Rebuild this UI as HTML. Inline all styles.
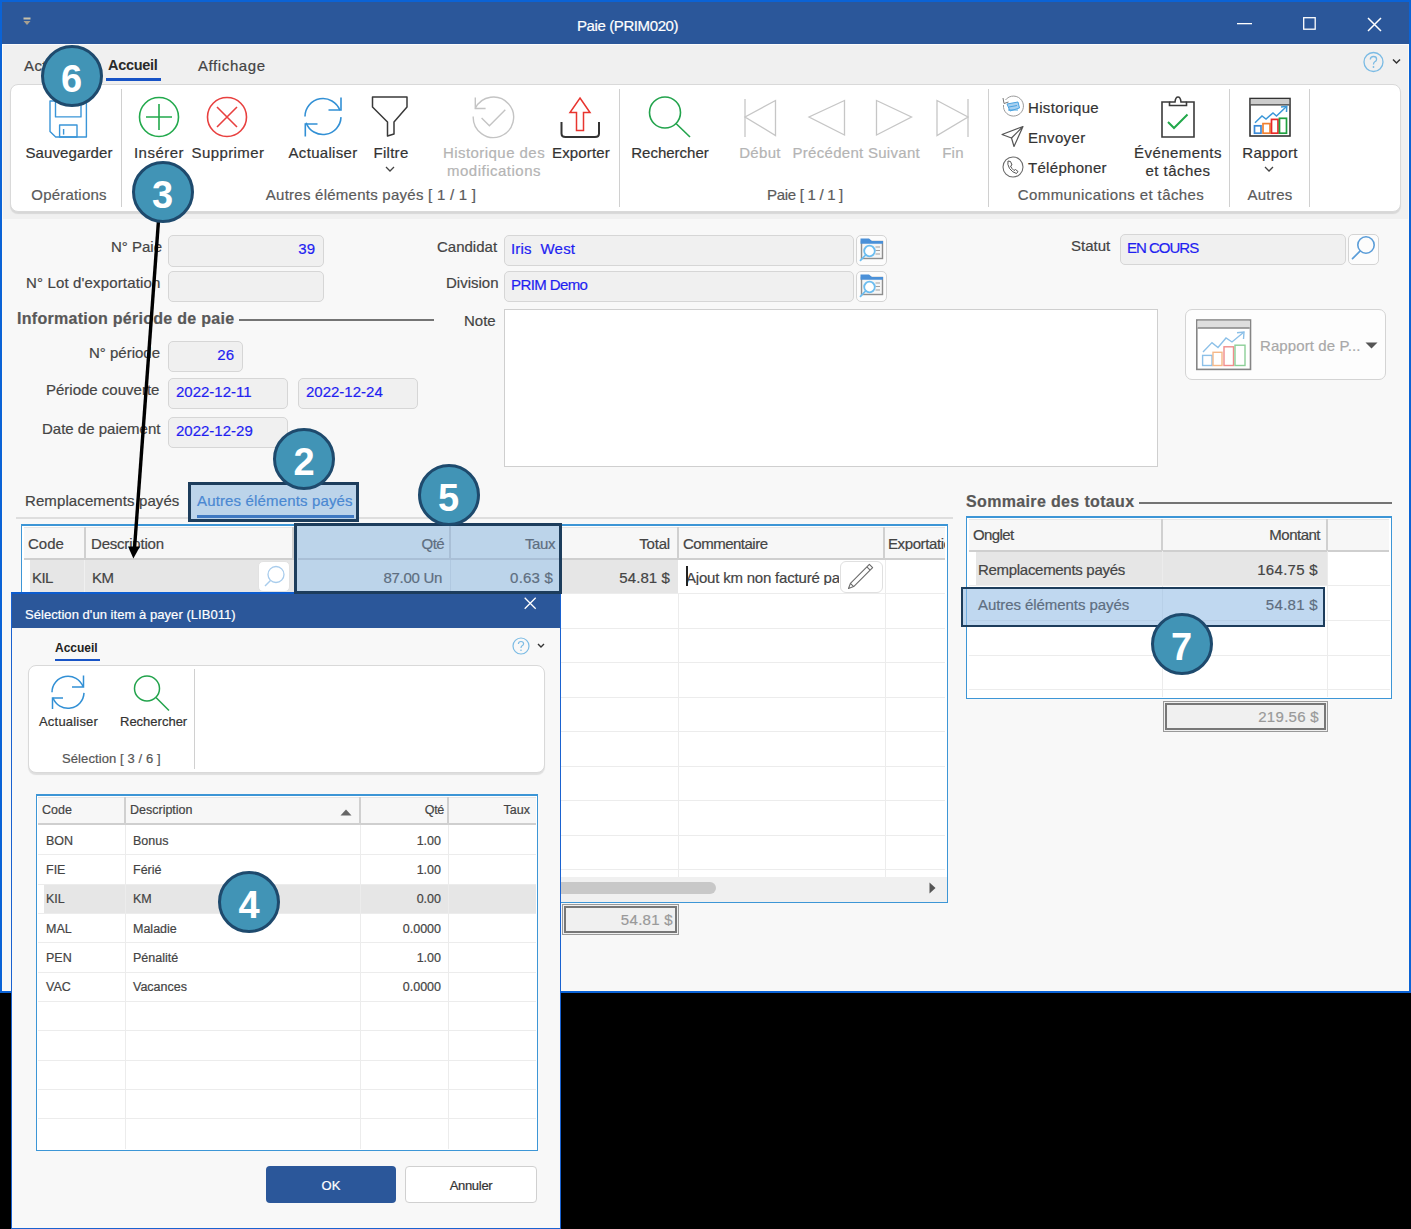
<!DOCTYPE html>
<html><head><meta charset="utf-8">
<style>
*{margin:0;padding:0;box-sizing:border-box}
html,body{width:1411px;height:1229px;overflow:hidden;background:#000;font-family:"Liberation Sans",sans-serif;}
.a{position:absolute}
.t{position:absolute;white-space:nowrap;line-height:1;}
.t,.lbl,.val,.rb,.grp,.gh{-webkit-text-stroke:0.2px currentColor}
.ns{-webkit-text-stroke:0 !important}
svg{position:absolute;overflow:visible}
#win{position:absolute;left:0;top:0;width:1411px;height:993px;background:#f8f8f8;border-left:2px solid #0b63d6;border-right:2px solid #0b63d6;border-top:2px solid #0b63d6;border-bottom:2px solid #0b63d6}
#win2{position:absolute;left:2px;top:44px;width:1407px;height:947px;border:1px solid #fdfaf4;border-top:none}
.inp{position:absolute;background:#f0f0f0;border:1px solid #d6d6d6;border-radius:5px}
.lbl{position:absolute;white-space:nowrap;line-height:1;font-size:15px;color:#444}
.val{position:absolute;white-space:nowrap;line-height:1;font-size:15px;color:#1f1ff0}
.sep{position:absolute;width:1px;background:#d0d0d0}
.rb{position:absolute;white-space:nowrap;line-height:1;font-size:15px;color:#333;text-align:center}
.rbd{color:#b4b4b4}
.grp{position:absolute;white-space:nowrap;line-height:1;font-size:15px;color:#5a5a5a;text-align:center}
.circ{position:absolute;z-index:2;width:62px;height:62px;border-radius:50%;background:#4194b6;border:3.7px solid #1e4a6d;color:#fff;font-weight:bold;font-size:38px;text-align:center;line-height:62px}
.hl{position:absolute;background:#bcd4ea;border:3px solid #1d3d5c}
.gh{position:absolute;white-space:nowrap;line-height:1;font-size:15px;color:#444}
</style></head><body>
<div id="win"></div><div id="win2"></div>
<!-- title bar -->
<div class="a" style="left:2px;top:2px;width:1407px;height:42px;background:#2b579a"></div>
<div class="t" style="left:577px;top:18px;font-size:15px;color:#fff;letter-spacing:-0.4px">Paie (PRIM020)</div>
<svg style="left:22px;top:16px" width="12" height="12"><rect x="1.5" y="1.5" width="7" height="2" fill="#c8c0a8"/><path d="M1.5 5 L8.5 5 L5 9 Z" fill="#a8a090"/></svg>
<svg style="left:1237px;top:23px" width="16" height="2"><rect x="0" y="0" width="15" height="1.3" fill="#fff"/></svg>
<svg style="left:1303px;top:17px" width="14" height="14"><rect x="0.7" y="0.7" width="11.5" height="11.5" fill="none" stroke="#fff" stroke-width="1.3"/></svg>
<svg style="left:1367px;top:17px" width="16" height="16"><path d="M1 1 L14 14 M14 1 L1 14" stroke="#fff" stroke-width="1.5"/></svg>
<!-- ribbon tab area -->
<div class="a" style="left:3px;top:44px;width:1405px;height:175px;background:#f0f0f0;border-top:1px solid #fbfbfb"></div>
<div class="t" style="left:24px;top:58px;font-size:15px;color:#444;letter-spacing:0.4px">Actions</div>
<div class="t ns" style="left:108px;top:58px;font-size:14.5px;color:#2a2a2a;font-weight:bold;letter-spacing:-0.3px">Accueil</div>
<div class="a" style="left:106px;top:78px;width:55px;height:3px;background:#1753c6"></div>
<div class="t" style="left:198px;top:58px;font-size:15px;color:#444;letter-spacing:0.6px">Affichage</div>
<svg style="left:1362px;top:51px" width="40" height="24"><circle cx="11.5" cy="11" r="9.5" fill="none" stroke="#7bbbe4" stroke-width="1.3"/><path d="M8.3 8.5 Q8.5 5.5 11.5 5.5 Q14.6 5.5 14.6 8.3 Q14.6 10 12.5 11 Q11.5 11.6 11.5 13.5" fill="none" stroke="#7bbbe4" stroke-width="1.3"/><circle cx="11.5" cy="16" r="0.9" fill="#7bbbe4"/><path d="M31 8.5 L34.5 12 L38 8.5" fill="none" stroke="#333" stroke-width="1.5"/></svg>

<!-- ribbon panel -->
<div class="a" style="left:10px;top:84px;width:1391px;height:128px;background:#fff;border:1px solid #d9d9d9;border-radius:8px;box-shadow:0 2px 1px rgba(0,0,0,0.10)"></div>
<div class="sep" style="left:121px;top:89px;height:118px"></div>
<div class="sep" style="left:619px;top:89px;height:118px"></div>
<div class="sep" style="left:988px;top:89px;height:118px"></div>
<div class="sep" style="left:1229px;top:89px;height:118px"></div>
<div class="sep" style="left:1309px;top:89px;height:118px"></div>

<!-- Sauvegarder floppy -->
<svg style="left:49px;top:97px" width="42" height="44"><g fill="none" stroke="#3a95d8" stroke-width="1.4" stroke-linejoin="round"><path d="M1 4 H37.4 V40 H6.7 L1 34.6 Z"/><rect x="6.5" y="4" width="25.5" height="15.9"/><rect x="10.6" y="28" width="17.4" height="12"/><path d="M14.6 32 V37.6"/></g></svg>
<div class="rb" style="left:16px;top:145px;width:106px;letter-spacing:0.1px">Sauvegarder</div>
<div class="grp" style="left:16px;top:187px;width:106px;letter-spacing:0.2px">Opérations</div>

<!-- Inserer -->
<svg style="left:137px;top:95px" width="44" height="44"><circle cx="22" cy="22" r="19.5" fill="none" stroke="#22a94c" stroke-width="1.6"/><path d="M9 22 H35 M22 9 V35" stroke="#22a94c" stroke-width="1.6"/></svg>
<div class="rb" style="left:129px;top:145px;width:60px;letter-spacing:0.5px">Insérer</div>
<!-- Supprimer -->
<svg style="left:205px;top:95px" width="44" height="44"><circle cx="22" cy="22" r="19.5" fill="none" stroke="#e8403f" stroke-width="1.6"/><path d="M12 12 L32 32 M32 12 L12 32" stroke="#e8403f" stroke-width="1.6"/></svg>
<div class="rb" style="left:190px;top:145px;width:76px;letter-spacing:0.4px">Supprimer</div>
<!-- Actualiser -->
<svg style="left:301px;top:95px" width="46" height="46"><g fill="none" stroke="#3290d5" stroke-width="1.6"><path d="M4 21.5 A18 18 0 0 1 38.9 15.34"/><path d="M40 2.5 V15 H27.5"/><path d="M39.99 22.13 A18 18 0 0 1 5.09 27.66"/><path d="M4.3 41.5 V29 H16.5"/></g></svg>
<div class="rb" style="left:286px;top:145px;width:74px;letter-spacing:0.3px">Actualiser</div>
<!-- Filtre -->
<svg style="left:371px;top:95px" width="40" height="46"><path d="M1.5 2 H36 V12 L23 27 V39 L16.5 41 V27 L1.5 12 Z" fill="none" stroke="#3a3a3a" stroke-width="1.5" stroke-linejoin="round"/></svg>
<div class="rb" style="left:365px;top:145px;width:52px;letter-spacing:0.3px">Filtre</div>
<svg style="left:385px;top:166px" width="10" height="7"><path d="M1 1 L5 5 L9 1" fill="none" stroke="#444" stroke-width="1.3"/></svg>
<div class="grp" style="left:230px;top:187px;width:282px;letter-spacing:0.25px">Autres éléments payés [ 1 / 1 ]</div>
<!-- Historique des modifs -->
<svg style="left:471px;top:95px" width="46" height="46"><g fill="none" stroke="#c4c4c4" stroke-width="1.4"><path d="M2.22 21.49 A20.2 20.2 0 1 0 4.23 13.48"/><path d="M4.3 2.5 V13.5 H14.6"/><path d="M10.6 23 L18.4 30.8 L34.3 14.7"/></g></svg>
<div class="rb rbd" style="left:437px;top:145px;width:114px;letter-spacing:0.45px">Historique des</div>
<div class="rb rbd" style="left:437px;top:163px;width:114px;letter-spacing:0.5px">modifications</div>
<!-- Exporter -->
<svg style="left:558px;top:95px" width="44" height="46"><path d="M22 3 L32 17.5 H25.5 V35.5 H18.5 V17.5 H12 Z" fill="none" stroke="#e8352f" stroke-width="1.5" stroke-linejoin="miter"/><path d="M3.5 27 V38.5 Q3.5 42 7.5 42 H37 Q41 42 41 38.5 V27" fill="none" stroke="#333" stroke-width="2"/></svg>
<div class="rb" style="left:545px;top:145px;width:72px;letter-spacing:0.15px">Exporter</div>
<!-- Rechercher -->
<svg style="left:645px;top:94px" width="50" height="46"><circle cx="20" cy="18.5" r="15.5" fill="none" stroke="#22a34c" stroke-width="1.6"/><path d="M31 29.5 L45 43" stroke="#22a34c" stroke-width="1.6"/></svg>
<div class="rb" style="left:626px;top:145px;width:88px">Rechercher</div>
<!-- nav -->
<svg style="left:740px;top:96px" width="240" height="46"><g fill="none" stroke="#c6c6c6" stroke-width="1.3"><path d="M5 3 V41"/><path d="M35.5 4.5 L5 21 L35.5 39.5 Z"/><path d="M104.5 4.5 L69 21 L104.5 39 Z"/><path d="M136.5 4.5 L171.5 21 L136.5 39 Z"/><path d="M197 4.5 L228 21 L197 39.5 Z"/><path d="M228 3 V41"/></g></svg>
<div class="rb rbd" style="left:730px;top:145px;width:60px;letter-spacing:0.3px">Début</div>
<div class="rb rbd" style="left:789px;top:145px;width:78px;letter-spacing:0.3px">Précédent</div>
<div class="rb rbd" style="left:866px;top:145px;width:56px;letter-spacing:0.3px">Suivant</div>
<div class="rb rbd" style="left:933px;top:145px;width:40px;letter-spacing:0.3px">Fin</div>
<div class="grp" style="left:740px;top:187px;width:130px;letter-spacing:-0.3px">Paie [ 1 / 1 ]</div>
<!-- communications -->
<svg style="left:1001px;top:95px" width="24" height="24"><path d="M4.5 5 A10 10 0 1 1 2.5 10" fill="none" stroke="#9a9a9a" stroke-width="1"/><path d="M2 3 L3 8.5 L7.5 7" fill="none" stroke="#777" stroke-width="1"/><path d="M6 9 L17 7 L18.5 13 L9 16 Z" fill="#a8d0f0" stroke="#4aa3e0" stroke-width="1"/><path d="M8 12 L16 10.5 M7 15 L17 15" stroke="#4aa3e0" stroke-width="1"/></svg>
<div class="rb" style="left:1028px;top:100px;letter-spacing:0.35px">Historique</div>
<svg style="left:1001px;top:125px" width="24" height="24"><path d="M1 9.5 L22 1.5 L13 21.5 L10.5 13 Z M10.5 13 L22 1.5" fill="none" stroke="#555" stroke-width="1.2" stroke-linejoin="round"/></svg>
<div class="rb" style="left:1028px;top:130px;letter-spacing:0.35px">Envoyer</div>
<svg style="left:1001px;top:155px" width="24" height="24"><circle cx="12" cy="12" r="10" fill="none" stroke="#6a6a6a" stroke-width="1.1"/><path d="M7 6 Q6 9 8.5 13.5 Q11.5 17.5 15.5 18.5 L17 16.5 L14.5 14.5 L13 15.5 Q10.5 13.5 9.5 11 L11 10 L9.5 6.5 Z" fill="none" stroke="#555" stroke-width="1"/></svg>
<div class="rb" style="left:1028px;top:160px;letter-spacing:0.3px">Téléphoner</div>
<!-- evenements -->
<svg style="left:1160px;top:95px" width="38" height="46"><path d="M2 7 H9.5 V10.5 H26.5 V7 H34 V42 H2 Z" fill="none" stroke="#3a3a3a" stroke-width="1.6"/><path d="M9.5 7 H15 Q15.5 2 18 2 Q20.5 2 21 7 H26.5" fill="none" stroke="#3a3a3a" stroke-width="1.6"/><path d="M8 27 L14 33 L27.5 19.5" fill="none" stroke="#21a84a" stroke-width="2"/></svg>
<div class="rb" style="left:1128px;top:145px;width:100px;letter-spacing:0.45px">Événements</div>
<div class="rb" style="left:1128px;top:163px;width:100px;letter-spacing:0.45px">et tâches</div>
<div class="grp" style="left:995px;top:187px;width:232px;letter-spacing:0.4px">Communications et tâches</div>
<!-- rapport -->
<svg style="left:1249px;top:97px" width="44" height="42"><rect x="1" y="1.5" width="40" height="37.5" fill="#fff" stroke="#333" stroke-width="1.6"/><rect x="1.8" y="2.3" width="38.4" height="5" fill="#ccc"/><path d="M1.8 7.8 H40.2" stroke="#333" stroke-width="1.2"/><g fill="none" stroke-width="1.7"><path d="M6 25.8 L13 19 L17 22 L24 16 L27.5 19 L37.5 9.5" stroke="#3b97d8" stroke-width="1.5"/><path d="M32 10 L37.8 9.3 L37.5 15" stroke="#3b97d8" stroke-width="1.5"/><rect x="5.5" y="28.8" width="6.5" height="7.4" stroke="#3b8ad8"/><rect x="14" y="26.6" width="7" height="9.6" stroke="#f08030"/><rect x="22.5" y="22.4" width="6.5" height="13.8" stroke="#e82828"/><rect x="30.5" y="21.3" width="7" height="14.9" stroke="#1fa040"/></g></svg>
<div class="rb" style="left:1230px;top:145px;width:80px;letter-spacing:0.3px">Rapport</div>
<svg style="left:1264px;top:166px" width="10" height="7"><path d="M1 1 L5 5 L9 1" fill="none" stroke="#444" stroke-width="1.3"/></svg>
<div class="grp" style="left:1230px;top:187px;width:80px;letter-spacing:0.3px">Autres</div>
<!-- FORM -->
<div class="lbl" style="left:111px;top:239.0px">N° Paie</div>
<div class="inp" style="left:168px;top:235px;width:156px;height:32px"></div>
<div class="val" style="left:168px;top:241.3px;width:147px;text-align:right">39</div>
<div class="lbl" style="left:26px;top:275.0px;letter-spacing:0.15px">N° Lot d'exportation</div>
<div class="inp" style="left:168px;top:271px;width:156px;height:31px"></div>
<div class="t" style="left:17px;top:310.8px;font-size:16px;font-weight:bold;color:#585858;letter-spacing:0.28px">Information période de paie</div>
<div class="a" style="left:239px;top:319px;width:195px;height:1.5px;background:#747474"></div>
<div class="lbl" style="left:89px;top:345.0px">N° période</div>
<div class="inp" style="left:168px;top:341px;width:75px;height:31px"></div>
<div class="val" style="left:168px;top:347.3px;width:66px;text-align:right">26</div>
<div class="lbl" style="left:46px;top:382.0px">Période couverte</div>
<div class="inp" style="left:168px;top:378px;width:120px;height:31px"></div>
<div class="val" style="left:176px;top:384.3px;letter-spacing:0px">2022-12-11</div>
<div class="inp" style="left:298px;top:378px;width:120px;height:31px"></div>
<div class="val" style="left:306px;top:384.3px;letter-spacing:0px">2022-12-24</div>
<div class="lbl" style="left:42px;top:421.0px">Date de paiement</div>
<div class="inp" style="left:168px;top:417px;width:120px;height:31px"></div>
<div class="val" style="left:176px;top:423.3px;letter-spacing:0px">2022-12-29</div>

<div class="lbl" style="left:437px;top:239.0px">Candidat</div>
<div class="inp" style="left:504px;top:235px;width:350px;height:31px"></div>
<div class="val" style="left:511px;top:240.7px;letter-spacing:0.2px">Iris&nbsp; West</div>
<div class="inp" style="left:856px;top:235px;width:31px;height:31px;background:#fcfcfc;border-color:#d4d4d4"></div>
<div class="lbl" style="left:446px;top:275.0px">Division</div>
<div class="inp" style="left:504px;top:271px;width:350px;height:31px"></div>
<div class="val" style="left:511px;top:276.7px;letter-spacing:-0.6px">PRIM Demo</div>
<div class="inp" style="left:856px;top:271px;width:31px;height:31px;background:#fcfcfc;border-color:#d4d4d4"></div>
<svg style="left:856px;top:235px" width="31" height="31"><g><rect x="5.5" y="6.5" width="21" height="17" fill="#f6f6f6" stroke="#8e8e8e" stroke-width="1.4"/><path d="M4.5 3.5 H13 L16 6 H27 V8.8 H4.5 Z" fill="#4a90d8"/><path d="M19.5 12 H24 M19.5 15.5 H24 M19.5 19 H24" stroke="#a0a0a0" stroke-width="1.2"/><circle cx="13.5" cy="16" r="5.3" fill="#fff" stroke="#6cbdf0" stroke-width="1.8"/><path d="M9.6 20 L4.5 25.3" stroke="#6cbdf0" stroke-width="1.8" stroke-linecap="round"/></g></svg>
<svg style="left:856px;top:271px" width="31" height="31"><g><rect x="5.5" y="6.5" width="21" height="17" fill="#f6f6f6" stroke="#8e8e8e" stroke-width="1.4"/><path d="M4.5 3.5 H13 L16 6 H27 V8.8 H4.5 Z" fill="#4a90d8"/><path d="M19.5 12 H24 M19.5 15.5 H24 M19.5 19 H24" stroke="#a0a0a0" stroke-width="1.2"/><circle cx="13.5" cy="16" r="5.3" fill="#fff" stroke="#6cbdf0" stroke-width="1.8"/><path d="M9.6 20 L4.5 25.3" stroke="#6cbdf0" stroke-width="1.8" stroke-linecap="round"/></g></svg>
<div class="lbl" style="left:464px;top:313.0px">Note</div>
<div class="a" style="left:504px;top:309px;width:654px;height:158px;background:#fff;border:1px solid #cfcfcf"></div>

<div class="lbl" style="left:1071px;top:238.0px">Statut</div>
<div class="inp" style="left:1120px;top:234px;width:226px;height:31px"></div>
<div class="val" style="left:1127px;top:239.6px;letter-spacing:-1px">EN COURS</div>
<div class="inp" style="left:1348px;top:234px;width:31px;height:31px;background:#fcfcfc;border-color:#d4d4d4"></div>
<svg style="left:1350px;top:236px" width="28" height="28"><circle cx="16" cy="9" r="8.2" fill="none" stroke="#5b9dd8" stroke-width="1.6"/><path d="M10 15.2 L2.5 22.6" stroke="#5b9dd8" stroke-width="1.7" stroke-linecap="round"/></svg>

<div class="a" style="left:1185px;top:309px;width:201px;height:71px;background:#fdfdfd;border:1.5px solid #d4d4d4;border-radius:7px"></div>
<svg style="left:1195px;top:318px" width="58" height="54"><rect x="1.8" y="2" width="53.7" height="49.4" fill="#fff" stroke="#858585" stroke-width="1.6"/><rect x="2.6" y="2.8" width="52.1" height="7" fill="#dedede"/><path d="M2.6 10 H54.7" stroke="#858585" stroke-width="1.4"/><g fill="none" stroke-width="1.4"><path d="M8 34 L17 24.6 L23 29.5 L31 20 L37 24 L49 14" stroke="#8cc0e8"/><path d="M42 14.8 L49 14 L48.5 21" stroke="#8cc0e8"/><rect x="7.6" y="37.4" width="9.4" height="10.1" stroke="#8cc0e8"/><rect x="18" y="34.3" width="9" height="13.2" stroke="#f5b888"/><rect x="29" y="28.8" width="9.5" height="18.7" stroke="#f08c8c"/><rect x="40" y="27.2" width="10" height="20.3" stroke="#8ccf98"/></g></svg>
<div class="t" style="left:1260px;top:338px;font-size:15px;color:#a8a8a8;letter-spacing:0.1px">Rapport de P...</div>
<svg style="left:1365px;top:342px" width="14" height="8"><path d="M0.5 0.5 H12.5 L6.5 6.5 Z" fill="#555"/></svg>

<!-- tabs -->
<div class="a" style="left:16px;top:517px;width:937px;height:2px;background:#dedede"></div>
<div class="t" style="left:25px;top:493px;font-size:15px;color:#444;letter-spacing:0.1px">Remplacements payés</div>
<div class="hl" style="left:188px;top:482px;width:171px;height:40px"></div>
<div class="t" style="left:197px;top:493px;font-size:15px;color:#4a88d2;letter-spacing:0.15px">Autres éléments payés</div>
<div class="a" style="left:197px;top:515px;width:157px;height:3px;background:#3f79c2"></div>
<!-- MAIN GRID -->
<div class="a" style="left:21px;top:524px;width:927px;height:379px;background:#fff;border:1px solid #3d96d6;border-top-width:2px"></div>
<div class="a" style="left:24px;top:527px;width:921px;height:33px;background:#f7f7f7;border-bottom:2px solid #cfcfcf;border-top:1px solid #e6e6e6"></div>
<div class="a" style="left:84px;top:527px;width:2px;height:32px;background:#d0d0d0"></div>
<div class="a" style="left:292px;top:527px;width:2px;height:32px;background:#d0d0d0"></div>
<div class="a" style="left:449px;top:527px;width:2px;height:32px;background:#d0d0d0"></div>
<div class="a" style="left:677px;top:527px;width:2px;height:32px;background:#d0d0d0"></div>
<div class="a" style="left:883px;top:527px;width:2px;height:32px;background:#d0d0d0"></div>
<div class="gh" style="left:28px;top:536px">Code</div>
<div class="gh" style="left:91px;top:536px;letter-spacing:-0.2px">Description</div>
<div class="gh" style="left:590px;top:536px;width:80px;text-align:right;letter-spacing:-0.2px">Total</div>
<div class="gh" style="left:683px;top:536px;letter-spacing:-0.5px">Commentaire</div>
<div class="gh" style="left:888px;top:536px;letter-spacing:-0.4px;width:57px;overflow:hidden">Exportation</div>
<!-- row1 -->
<div class="a" style="left:30px;top:560px;width:648px;height:33px;background:#e6e6e6"></div>
<div class="a" style="left:84px;top:560px;width:1px;height:33px;background:#f0f0f0"></div>
<div class="gh" style="left:32px;top:570px;letter-spacing:-0.6px">KIL</div>
<div class="gh" style="left:92px;top:570px;letter-spacing:-0.6px">KM</div>
<div class="a" style="left:258px;top:561px;width:32px;height:31px;background:#fff;border:1px solid #e2e2e2;border-radius:5px"></div>
<svg style="left:260px;top:562px" width="30" height="30"><circle cx="16" cy="12.5" r="8" fill="none" stroke="#a8ccec" stroke-width="1.3"/><path d="M10.5 18.5 L5 24" stroke="#a8ccec" stroke-width="1.4"/></svg>
<div class="gh" style="left:590px;top:570px;width:80px;text-align:right;letter-spacing:0.1px">54.81 $</div>
<div class="gh" style="left:686px;top:570px;letter-spacing:-0.2px;width:153px;overflow:hidden">Ajout km non facturé pa</div>
<div class="a" style="left:686px;top:566px;width:2px;height:20px;background:#222"></div>
<div class="a" style="left:840px;top:561px;width:43px;height:32px;background:#fff;border:1px solid #e0e0e0;border-radius:6px"></div>
<svg style="left:845px;top:564px" width="34" height="28"><path d="M3.5 24.5 L5.41 19.33 L24.37 0.37 L27.63 3.63 L8.67 22.59 Z M5.41 19.33 L8.67 22.59 M21.87 2.87 L25.13 6.13" fill="none" stroke="#6a6a6a" stroke-width="1.1" stroke-linejoin="round"/></svg>
<!-- grid lines -->
<div class="a" style="left:561px;top:593px;width:384px;height:1px;background:#ececec"></div>
<div class="a" style="left:561px;top:628px;width:384px;height:1px;background:#ececec"></div>
<div class="a" style="left:561px;top:662px;width:384px;height:1px;background:#ececec"></div>
<div class="a" style="left:561px;top:697px;width:384px;height:1px;background:#ececec"></div>
<div class="a" style="left:561px;top:731px;width:384px;height:1px;background:#ececec"></div>
<div class="a" style="left:561px;top:766px;width:384px;height:1px;background:#ececec"></div>
<div class="a" style="left:561px;top:800px;width:384px;height:1px;background:#ececec"></div>
<div class="a" style="left:561px;top:835px;width:384px;height:1px;background:#ececec"></div>
<div class="a" style="left:561px;top:869px;width:384px;height:1px;background:#ececec"></div>
<div class="a" style="left:678px;top:593px;width:1px;height:284px;background:#ececec"></div>
<div class="a" style="left:885px;top:560px;width:1px;height:317px;background:#ececec"></div>
<!-- scrollbar -->
<div class="a" style="left:22px;top:877px;width:925px;height:25px;background:#f0f0f0"></div>
<div class="a" style="left:400px;top:882px;width:316px;height:12px;background:#c8c8c8;border-radius:6px"></div>
<svg style="left:928px;top:882px" width="10" height="12"><path d="M1.5 0.5 L7.5 6 L1.5 11.5 Z" fill="#555"/></svg>
<div class="a" style="left:562px;top:904px;width:117px;height:31px;border:1px solid #999;background:#f0f0f0"></div>
<div class="a" style="left:564px;top:906px;width:113px;height:27px;border:2px solid #777"></div>
<div class="gh" style="left:570px;top:912px;width:103px;text-align:right;color:#999;letter-spacing:0.3px">54.81 $</div>

<!-- SUMMARY -->
<div class="t" style="left:966px;top:494.3px;font-size:16px;font-weight:bold;color:#585858;letter-spacing:0.35px">Sommaire des totaux</div>
<div class="a" style="left:1139px;top:502px;width:253px;height:1.5px;background:#747474"></div>
<div class="a" style="left:966px;top:516px;width:426px;height:183px;background:#fff;border:1px solid #3d96d6;border-top-width:2px"></div>
<div class="a" style="left:969px;top:519px;width:420px;height:33px;background:#f7f7f7;border-bottom:2px solid #cfcfcf;border-top:1px solid #e6e6e6"></div>
<div class="a" style="left:1161px;top:519px;width:2px;height:32px;background:#d0d0d0"></div>
<div class="a" style="left:1326px;top:519px;width:2px;height:32px;background:#d0d0d0"></div>
<div class="gh" style="left:973px;top:527px;letter-spacing:-0.6px">Onglet</div>
<div class="gh" style="left:1200px;top:527px;width:120px;text-align:right;letter-spacing:-0.5px">Montant</div>
<div class="a" style="left:976px;top:552px;width:351px;height:33px;background:#e6e6e6"></div>
<div class="gh" style="left:978px;top:562px;letter-spacing:-0.3px">Remplacements payés</div>
<div class="gh" style="left:1200px;top:562px;width:118px;text-align:right;letter-spacing:0.3px">164.75 $</div>
<div class="a" style="left:969px;top:585px;width:421px;height:1px;background:#ececec"></div>
<div class="a" style="left:969px;top:620px;width:421px;height:1px;background:#ececec"></div>
<div class="a" style="left:969px;top:655px;width:421px;height:1px;background:#ececec"></div>
<div class="a" style="left:969px;top:689px;width:421px;height:1px;background:#ececec"></div>
<div class="a" style="left:1162px;top:551px;width:1px;height:146px;background:#ececec"></div>
<div class="a" style="left:1327px;top:551px;width:1px;height:146px;background:#ececec"></div>
<div class="hl" style="left:961px;top:587px;width:364px;height:40px;border-width:2.5px;background:rgba(150,190,230,0.6)"></div>
<div class="gh" style="left:978px;top:597px;color:#5e6e80;letter-spacing:-0.07px">Autres éléments payés</div>
<div class="gh" style="left:1200px;top:597px;width:118px;text-align:right;color:#5e6e80;letter-spacing:0.3px">54.81 $</div>
<div class="a" style="left:1163px;top:701px;width:165px;height:31px;border:1px solid #999;background:#f0f0f0"></div>
<div class="a" style="left:1165px;top:703px;width:161px;height:27px;border:2px solid #777"></div>
<div class="gh" style="left:1170px;top:709px;width:149px;text-align:right;color:#999;letter-spacing:0.3px">219.56 $</div>
<!-- BOX 5 -->
<div class="hl" style="left:294px;top:523px;width:268px;height:71px;z-index:1;background:transparent"></div>
<div class="a" style="left:297px;top:526px;width:262px;height:65px;background:#bcd4ea"></div>
<div class="a" style="left:449px;top:526px;width:2px;height:33px;background:#a9bfd6"></div>
<div class="a" style="left:450px;top:560px;width:1px;height:31px;background:#b0c8e0"></div>
<div class="a" style="left:298px;top:558px;width:261px;height:2px;background:#a9bfd6"></div>
<div class="gh" style="left:380px;top:536px;width:64px;text-align:right;color:#5e6e80;letter-spacing:-0.6px">Qté</div>
<div class="gh" style="left:480px;top:536px;width:75px;text-align:right;color:#5e6e80;letter-spacing:-0.4px">Taux</div>
<div class="gh" style="left:360px;top:570px;width:82px;text-align:right;color:#5e6e80;letter-spacing:-0.3px">87.00 Un</div>
<div class="gh" style="left:470px;top:570px;width:83px;text-align:right;color:#5e6e80;letter-spacing:0.2px">0.63 $</div>

<!-- DIALOG -->
<div class="a" style="left:11px;top:592px;width:550px;height:637px;background:#f8f8f8;border:1px solid #1a62d0;border-top:2px solid #0c5ccf"></div>
<div class="a" style="left:12px;top:594px;width:548px;height:34px;background:#2b579a"></div>
<div class="t" style="left:25px;top:608px;font-size:13px;color:#fff;letter-spacing:0.05px">Sélection d'un item à payer (LIB011)</div>
<svg style="left:524px;top:597px" width="14" height="14"><path d="M0.7 0.8 L11.7 11.8 M11.7 0.8 L0.7 11.8" stroke="#fff" stroke-width="1.3"/></svg>
<div class="t ns" style="left:55px;top:642px;font-size:12px;font-weight:bold;color:#222">Accueil</div>
<div class="a" style="left:55px;top:659px;width:45px;height:2px;background:#1753c6"></div>
<svg style="left:510px;top:635px" width="40" height="24"><circle cx="11" cy="11" r="8" fill="none" stroke="#7bbbe4" stroke-width="1.2"/><path d="M8.4 9 Q8.5 6.5 11 6.5 Q13.6 6.5 13.6 8.8 Q13.6 10.2 11.8 11 Q11 11.5 11 13" fill="none" stroke="#7bbbe4" stroke-width="1.2"/><circle cx="11" cy="15.3" r="0.8" fill="#7bbbe4"/><path d="M28 9 L31 12 L34 9" fill="none" stroke="#333" stroke-width="1.4"/></svg>
<div class="a" style="left:28px;top:665px;width:517px;height:108px;background:#fff;border:1px solid #d9d9d9;border-radius:8px;box-shadow:0 2px 1px rgba(0,0,0,0.10)"></div>
<div class="sep" style="left:194px;top:669px;height:100px"></div>
<svg style="left:49px;top:673px" width="38" height="38"><g fill="none" stroke="#3290d5" stroke-width="1.5"><path d="M3 19.3 A16 16 0 0 1 34.04 13.83"/><path d="M34.5 2.5 V14 H23"/><path d="M34.99 19.86 A16 16 0 0 1 3.96 24.77"/><path d="M3.5 36 V25 H14"/></g></svg>
<div class="t" style="left:39px;top:715px;font-size:13px;color:#333;letter-spacing:0.2px">Actualiser</div>
<svg style="left:130px;top:672px" width="44" height="40"><circle cx="17" cy="16.5" r="12.5" fill="none" stroke="#22a34c" stroke-width="1.5"/><path d="M26 25.5 L39 38.5" stroke="#22a34c" stroke-width="1.5"/></svg>
<div class="t" style="left:120px;top:715px;font-size:13px;color:#333">Rechercher</div>
<div class="t" style="left:62px;top:752px;font-size:13px;color:#555;letter-spacing:0.1px">Sélection [ 3 / 6 ]</div>

<!-- dialog grid -->
<div class="a" style="left:36px;top:794px;width:502px;height:357px;background:#fff;border:1px solid #3d96d6;border-top-width:2px"></div>
<div class="a" style="left:38px;top:797px;width:498px;height:28px;background:#f7f7f7;border-bottom:2px solid #cfcfcf;border-top:1px solid #e6e6e6"></div>
<div class="a" style="left:124px;top:797px;width:2px;height:28px;background:#d0d0d0"></div>
<div class="a" style="left:359px;top:797px;width:2px;height:28px;background:#d0d0d0"></div>
<div class="a" style="left:447px;top:797px;width:2px;height:28px;background:#d0d0d0"></div>
<div class="t" style="left:42px;top:804px;font-size:12.5px;color:#444">Code</div>
<div class="t" style="left:130px;top:804px;font-size:12.5px;color:#444">Description</div>
<svg style="left:340px;top:809px" width="14" height="8"><path d="M0.5 6.5 L6 0.5 L11.5 6.5 Z" fill="#666"/></svg>
<div class="t" style="left:390px;top:804px;width:54px;text-align:right;font-size:12.5px;color:#444;letter-spacing:-0.3px">Qté</div>
<div class="t" style="left:470px;top:804px;width:60px;text-align:right;font-size:12.5px;color:#444">Taux</div>
<div class="a" style="left:44px;top:884px;width:492px;height:29px;background:#e6e6e6"></div>
<div id="dg"></div>
<div class="a" style="left:38px;top:854px;width:498px;height:1px;background:#ececec"></div>
<div class="a" style="left:38px;top:884px;width:498px;height:1px;background:#ececec"></div>
<div class="a" style="left:38px;top:913px;width:498px;height:1px;background:#ececec"></div>
<div class="a" style="left:38px;top:942px;width:498px;height:1px;background:#ececec"></div>
<div class="a" style="left:38px;top:972px;width:498px;height:1px;background:#ececec"></div>
<div class="a" style="left:38px;top:1001px;width:498px;height:1px;background:#ececec"></div>
<div class="a" style="left:38px;top:1030px;width:498px;height:1px;background:#ececec"></div>
<div class="a" style="left:38px;top:1060px;width:498px;height:1px;background:#ececec"></div>
<div class="a" style="left:38px;top:1089px;width:498px;height:1px;background:#ececec"></div>
<div class="a" style="left:38px;top:1118px;width:498px;height:1px;background:#ececec"></div>
<div class="a" style="left:125px;top:825px;width:1px;height:324px;background:#ececec"></div>
<div class="a" style="left:360px;top:825px;width:1px;height:324px;background:#ececec"></div>
<div class="a" style="left:448px;top:825px;width:1px;height:324px;background:#ececec"></div>
<div class="t" style="left:46px;top:834.6px;font-size:12.5px;color:#444">BON</div>
<div class="t" style="left:133px;top:834.6px;font-size:12.5px;color:#444">Bonus</div>
<div class="t" style="left:360px;top:834.6px;width:81px;text-align:right;font-size:12.5px;color:#444">1.00</div>
<div class="t" style="left:46px;top:864.0px;font-size:12.5px;color:#444">FIE</div>
<div class="t" style="left:133px;top:864.0px;font-size:12.5px;color:#444">Férié</div>
<div class="t" style="left:360px;top:864.0px;width:81px;text-align:right;font-size:12.5px;color:#444">1.00</div>
<div class="t" style="left:46px;top:893.3px;font-size:12.5px;color:#444">KIL</div>
<div class="t" style="left:133px;top:893.3px;font-size:12.5px;color:#444">KM</div>
<div class="t" style="left:360px;top:893.3px;width:81px;text-align:right;font-size:12.5px;color:#444">0.00</div>
<div class="t" style="left:46px;top:922.6px;font-size:12.5px;color:#444">MAL</div>
<div class="t" style="left:133px;top:922.6px;font-size:12.5px;color:#444">Maladie</div>
<div class="t" style="left:360px;top:922.6px;width:81px;text-align:right;font-size:12.5px;color:#444">0.0000</div>
<div class="t" style="left:46px;top:952.0px;font-size:12.5px;color:#444">PEN</div>
<div class="t" style="left:133px;top:952.0px;font-size:12.5px;color:#444">Pénalité</div>
<div class="t" style="left:360px;top:952.0px;width:81px;text-align:right;font-size:12.5px;color:#444">1.00</div>
<div class="t" style="left:46px;top:981.4px;font-size:12.5px;color:#444">VAC</div>
<div class="t" style="left:133px;top:981.4px;font-size:12.5px;color:#444">Vacances</div>
<div class="t" style="left:360px;top:981.4px;width:81px;text-align:right;font-size:12.5px;color:#444">0.0000</div>
<div class="a" style="left:266px;top:1166px;width:130px;height:37px;background:#2b579a;border-radius:4px"></div>
<div class="t" style="left:266px;top:1179px;width:130px;text-align:center;font-size:13px;color:#fff">OK</div>
<div class="a" style="left:405px;top:1166px;width:132px;height:37px;background:#fff;border:1px solid #d0d0d0;border-radius:4px"></div>
<div class="t" style="left:405px;top:1179px;width:132px;text-align:center;font-size:13px;color:#333;letter-spacing:-0.3px">Annuler</div>
<!-- ARROW -->
<svg style="left:0;top:0" width="1411" height="1229"><path d="M160 200 L134.6 547" stroke="#000" stroke-width="3.4"/><path d="M128 546.5 L140 546.5 L133.4 558.5 Z" fill="#000"/></svg>
<!-- CIRCLES -->
<div class="circ" style="left:40.5px;top:45px">6</div>
<div class="circ" style="left:131.7px;top:160.5px">3</div>
<div class="circ" style="left:273px;top:428px">2</div>
<div class="circ" style="left:417.6px;top:464px">5</div>
<div class="circ" style="left:218px;top:871px">4</div>
<div class="circ" style="left:1150.6px;top:613px">7</div>
</body></html>
